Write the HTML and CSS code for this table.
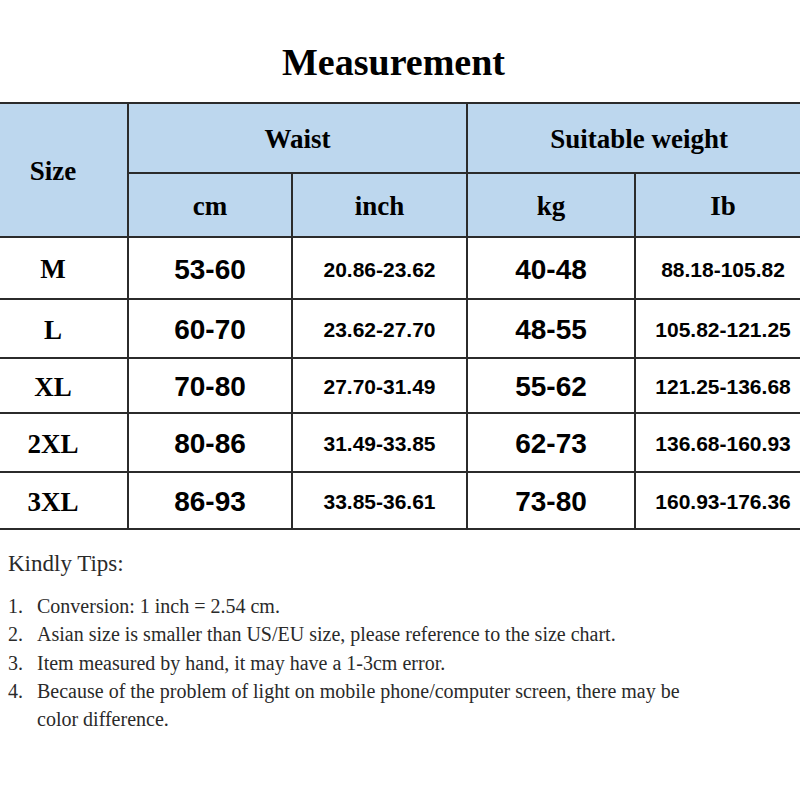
FILE: index.html
```html
<html>
<head>
  <meta charset="utf-8">
  <title>Measurement</title>
  <link rel="stylesheet" href="styles.css">
</head>
<body>
  <div class="chart">
    <h1 class="title">Measurement</h1>
    <table class="sizes">
      <colgroup>
        <col class="c-size">
        <col class="c-cm">
        <col class="c-inch">
        <col class="c-kg">
        <col class="c-lb">
      </colgroup>
      <thead>
        <tr class="head-top">
          <th rowspan="2">Size</th>
          <th colspan="2">Waist</th>
          <th colspan="2">Suitable weight</th>
        </tr>
        <tr class="head-sub">
          <th>cm</th>
          <th>inch</th>
          <th>kg</th>
          <th>Ib</th>
        </tr>
      </thead>
      <tbody>
        <tr>
          <td class="size">M</td><td class="big">53-60</td><td class="small">20.86-23.62</td><td class="big">40-48</td><td class="small">88.18-105.82</td>
        </tr>
        <tr>
          <td class="size">L</td><td class="big">60-70</td><td class="small">23.62-27.70</td><td class="big">48-55</td><td class="small">105.82-121.25</td>
        </tr>
        <tr>
          <td class="size">XL</td><td class="big">70-80</td><td class="small">27.70-31.49</td><td class="big">55-62</td><td class="small">121.25-136.68</td>
        </tr>
        <tr>
          <td class="size">2XL</td><td class="big">80-86</td><td class="small">31.49-33.85</td><td class="big">62-73</td><td class="small">136.68-160.93</td>
        </tr>
        <tr>
          <td class="size">3XL</td><td class="big">86-93</td><td class="small">33.85-36.61</td><td class="big">73-80</td><td class="small">160.93-176.36</td>
        </tr>
      </tbody>
    </table>
  </div>

  <div class="tips">
    <p class="tips-title">Kindly Tips:</p>
    <ol class="tips-list">
      <li><span class="num">1.</span><span class="txt">Conversion: 1 inch = 2.54 cm.</span></li>
      <li><span class="num">2.</span><span class="txt">Asian size is smaller than US/EU size, please reference to the size chart.</span></li>
      <li><span class="num">3.</span><span class="txt">Item measured by hand, it may have a 1-3cm error.</span></li>
      <li><span class="num">4.</span><span class="txt">Because of the problem of light on mobile phone/computer screen, there may be color difference.</span></li>
    </ol>
  </div>
</body>
</html>
```

FILE: styles.css
```css
body {
  margin: 0;
  background-color: #fff;
  color: #000;
  font-family: 'Liberation Serif', 'Times New Roman', serif;
  overflow: hidden;
}

.chart {
  width: 833px;
  margin-left: -23px;
}

.title {
  margin: 0 0 18px 0;
  padding-top: 40px;
  font-size: 38px;
  line-height: 44px;
  font-weight: bold;
  text-align: center;
}

.sizes {
  width: 833px;
  border-collapse: collapse;
  table-layout: fixed;
}

.c-size { width: 150px; }
.c-cm   { width: 164px; }
.c-inch { width: 175px; }
.c-kg   { width: 168px; }
.c-lb   { width: 176px; }

.sizes th,
.sizes td {
  border: 2px solid #2b2b2b;
  padding: 3px 0 0 0;
  text-align: center;
  vertical-align: middle;
}

.sizes th {
  background-color: #bdd7ee;
  font-size: 27px;
  font-weight: bold;
}

.head-top { height: 70px; }
.head-sub { height: 64px; }

/* data rows are not quite even in the chart */
.sizes tbody tr:nth-child(1) { height: 62px; }
.sizes tbody tr:nth-child(2) { height: 59px; }
.sizes tbody tr:nth-child(3) { height: 55px; }
.sizes tbody tr:nth-child(4) { height: 59px; }
.sizes tbody tr:nth-child(5) { height: 57px; }

.sizes td.size {
  font-size: 27px;
  font-weight: bold;
}

.sizes td.big {
  font-family: 'Liberation Sans', Arial, sans-serif;
  font-size: 28px;
  font-weight: bold;
}

.sizes td.small {
  font-family: 'Liberation Sans', Arial, sans-serif;
  font-size: 21px;
  font-weight: bold;
}

.tips {
  padding: 20px 0 0 8px;
  color: #2a2a2a;
}

.tips-title {
  margin: 0 0 14px 0;
  font-size: 23px;
  line-height: 28px;
}

.tips-list {
  margin: 0;
  padding: 0;
  list-style: none;
  font-size: 20px;
  line-height: 28.3px;
}

.tips-list li {
  display: flex;
}

.tips-list .num {
  width: 29px;
  flex: none;
}

.tips-list .txt {
  width: 660px;
}
```
